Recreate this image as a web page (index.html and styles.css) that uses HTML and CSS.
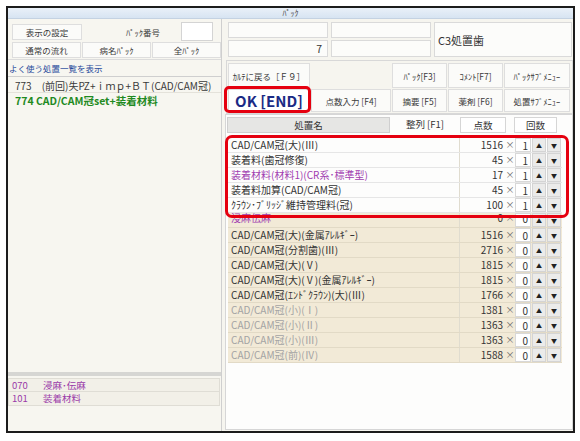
FILE: index.html
```html
<!DOCTYPE html>
<html lang="ja">
<head>
<meta charset="utf-8">
<link rel="stylesheet" href="styles.css">
</head>
<body>
<div class="win">
  <div class="title">ﾊﾟｯｸ</div>
  <div class="body">
    <div class="left">
      <div class="ltop">
        <div class="lrow">
          <div class="btn w70">表示の設定</div>
          <div class="lbl">ﾊﾟｯｸ番号</div>
          <div class="inp"></div>
        </div>
        <div class="lrow">
          <div class="btn w70">通常の流れ</div>
          <div class="btn w70">病名ﾊﾟｯｸ</div>
          <div class="btn w70">全ﾊﾟｯｸ</div>
        </div>
      </div>
      <div class="link">よく使う処置一覧を表示</div>
      <div class="plist">
        <div class="pitem">773　(前回)失PZ+ｉｍｐ+ＢＴ(CAD/CAM冠)</div>
        <div class="pitem sel">774 CAD/CAM冠set+装着材料</div>
      </div>
      <div class="divider"></div>
      <div class="blist">
        <div class="bitem"><span class="code">070</span>浸麻･伝麻</div>
        <div class="bitem"><span class="code">101</span>装着材料</div>
      </div>
    </div>
    <div class="right">
      <div class="rtop">
        <div class="box"></div>
        <div class="box"></div>
        <div class="box tooth">C3処置歯</div>
        <div class="box num">7</div>
        <div class="box"></div>
      </div>
      <div class="btns">
        <div class="btn">ｶﾙﾃに戻る［Ｆ９］</div>
        <div class="blank"></div>
        <div class="btn">ﾊﾟｯｸ[F3]</div>
        <div class="btn">ｺﾒﾝﾄ[F7]</div>
        <div class="btn">ﾊﾟｯｸｻﾌﾞﾒﾆｭｰ</div>
        <div class="btn ok">OK [END]</div>
        <div class="btn">点数入力 [F4]</div>
        <div class="btn">摘要 [F5]</div>
        <div class="btn">薬剤 [F6]</div>
        <div class="btn">処置ｻﾌﾞﾒﾆｭｰ</div>
      </div>
      <div class="tbox">
        <div class="thead">
          <div class="th-name">処置名</div>
          <div class="th-sort">整列 [F1]</div>
          <div class="th-box pts">点数</div>
          <div class="th-box cnt">回数</div>
        </div>
        <div class="rows">
          <div class="group">
            <div class="row white"><div class="nm">CAD/CAM冠(大)(Ⅲ)</div><div class="pt">1516</div><div class="x">×</div><div class="q">1</div><div class="ar">▲</div><div class="ar">▼</div></div>
            <div class="row white"><div class="nm">装着料(歯冠修復)</div><div class="pt">45</div><div class="x">×</div><div class="q">1</div><div class="ar">▲</div><div class="ar">▼</div></div>
            <div class="row white purple"><div class="nm">装着材料(材料1)(CR系･標準型)</div><div class="pt">17</div><div class="x">×</div><div class="q">1</div><div class="ar">▲</div><div class="ar">▼</div></div>
            <div class="row white"><div class="nm">装着料加算(CAD/CAM冠)</div><div class="pt">45</div><div class="x">×</div><div class="q">1</div><div class="ar">▲</div><div class="ar">▼</div></div>
            <div class="row white"><div class="nm">ｸﾗｳﾝ･ﾌﾞﾘｯｼﾞ維持管理料(冠)</div><div class="pt">100</div><div class="x">×</div><div class="q">1</div><div class="ar">▲</div><div class="ar">▼</div></div>
          </div>
          <div class="row purple under"><div class="nm">浸麻伝麻</div><div class="pt">0</div><div class="x">×</div><div class="q">0</div><div class="ar">▲</div><div class="ar">▼</div></div>
          <div class="row"><div class="nm">CAD/CAM冠(大)(金属ｱﾚﾙｷﾞｰ)</div><div class="pt">1516</div><div class="x">×</div><div class="q">0</div><div class="ar">▲</div><div class="ar">▼</div></div>
          <div class="row"><div class="nm">CAD/CAM冠(分割歯)(Ⅲ)</div><div class="pt">2716</div><div class="x">×</div><div class="q">0</div><div class="ar">▲</div><div class="ar">▼</div></div>
          <div class="row"><div class="nm">CAD/CAM冠(大)(Ⅴ)</div><div class="pt">1815</div><div class="x">×</div><div class="q">0</div><div class="ar">▲</div><div class="ar">▼</div></div>
          <div class="row"><div class="nm">CAD/CAM冠(大)(Ⅴ)(金属ｱﾚﾙｷﾞｰ)</div><div class="pt">1815</div><div class="x">×</div><div class="q">0</div><div class="ar">▲</div><div class="ar">▼</div></div>
          <div class="row"><div class="nm">CAD/CAM冠(ｴﾝﾄﾞｸﾗｳﾝ)(大)(Ⅲ)</div><div class="pt">1766</div><div class="x">×</div><div class="q">0</div><div class="ar">▲</div><div class="ar">▼</div></div>
          <div class="row gray"><div class="nm">CAD/CAM冠(小)(Ⅰ)</div><div class="pt">1381</div><div class="x">×</div><div class="q">0</div><div class="ar">▲</div><div class="ar">▼</div></div>
          <div class="row gray"><div class="nm">CAD/CAM冠(小)(Ⅱ)</div><div class="pt">1363</div><div class="x">×</div><div class="q">0</div><div class="ar">▲</div><div class="ar">▼</div></div>
          <div class="row gray"><div class="nm">CAD/CAM冠(小)(Ⅲ)</div><div class="pt">1363</div><div class="x">×</div><div class="q">0</div><div class="ar">▲</div><div class="ar">▼</div></div>
          <div class="row gray"><div class="nm">CAD/CAM冠(前)(Ⅳ)</div><div class="pt">1588</div><div class="x">×</div><div class="q">0</div><div class="ar">▲</div><div class="ar">▼</div></div>
        </div>
      </div>
    </div>
  </div>
</div>
</body>
</html>
```
FILE: styles.css
```css
* { box-sizing: border-box; }
html, body { margin: 0; padding: 0; background: #fff; }
body {
  font-family: "Noto Sans CJK JP", "Noto Sans", sans-serif;
  color: #333;
  font-size: 9px;
}
.win {
  margin: 6px 0 0 6px;
  width: 569px;
  height: 427px;
  border: 2px solid #1c1c1c;
  background: #f6f5ef;
  display: flex;
  flex-direction: column;
}
.title {
  height: 11px;
  background: linear-gradient(#e9f0f8, #d7e4f2);
  border-bottom: 1px solid #c4d2e2;
  font-size: 8px;
  line-height: 10px;
  text-align: center;
  color: #444;
}
.body { flex: 1; display: flex; min-height: 0; }

/* left */
.left {
  width: 214px;
  border-right: 1px solid #cfcfcf;
  display: flex;
  flex-direction: column;
  background: #f7f6f0;
}
.ltop {
  height: 41px;
  padding: 4px 0 0 4px;
  border-bottom: 1px solid #dcdcdc;
  display: flex;
  flex-direction: column;
  gap: 1px;
}
.lrow { display: flex; gap: 1px; align-items: center; height: 17px; }
.btn {
  background: #fbfbf9;
  border: 1px solid #dedede;
  display: flex;
  align-items: center;
  justify-content: center;
  font-size: 8.5px;
  color: #3a3a3a;
  white-space: nowrap;
}
.w70 { width: 70px; height: 16px; }
.lbl { width: 97px; text-align: right; padding-right: 20px; font-size: 8.5px; color: #3a3a3a; }
.inp { width: 32px; height: 19px; background: #fff; border: 1px solid #d4d4d4; }
.link {
  height: 16px;
  line-height: 16px;
  padding-left: 1px;
  color: #2a4c9c;
  font-size: 8.5px;
}
.plist { flex: 1; border-top: 1px solid #cfcfcf; padding-top: 1px; }
.pitem {
  height: 15px;
  line-height: 15px;
  padding-left: 7px;
  font-size: 10px;
  white-space: nowrap;
  color: #3a3a3a;
  border-bottom: 1px solid #e4e2da;
}
.pitem.sel { color: #1f8a1f; font-weight: bold; font-size: 10.5px; border-bottom: none; }
.divider { height: 4px; background: #d6d6d3; }
.blist { height: 55px; padding-top: 2px; }
.bitem {
  height: 14px;
  line-height: 13px;
  width: 212px;
  background: #f2f0e8;
  border: 1px solid #dfddd5;
  border-top: none;
  color: #9a3aa8;
  font-size: 9.5px;
  padding-left: 3px;
  white-space: nowrap;
}
.bitem:first-child { border-top: 1px solid #dfddd5; }
.code { display: inline-block; width: 31px; }

/* right */
.right { flex: 1; display: flex; flex-direction: column; }
.rtop {
  height: 41px;
  padding: 3px 0 0 6px;
  display: grid;
  grid-template-columns: 100px 100px 138px;
  grid-template-rows: 16px 17px;
  column-gap: 3px;
  row-gap: 2px;
}
.box { background: #fcfcfa; border: 1px solid #dadada; }
.tooth {
  grid-column: 3;
  grid-row: 1 / span 2;
  display: flex;
  align-items: center;
  padding-left: 3px;
  font-size: 11px;
  color: #333;
}
.num { text-align: right; padding-right: 5px; font-size: 10.5px; line-height: 15px; }
.btns {
  height: 54px;
  margin-left: 4px;
  border: 1px solid #d8d8d8;
  padding: 2px 1px 1px 1px;
  display: grid;
  grid-template-columns: 82px 80px 55px 55px 66px;
  grid-template-rows: 25px 23px;
  gap: 1px;
}
.btns .btn { font-size: 8.5px; }
.btn.ok {
  position: relative;
  background: #fff;
  color: #1b2a85;
  font-weight: bold;
  font-size: 15px;
}
.btn.ok::after {
  content: "";
  position: absolute;
  top: -4px; left: -5px; right: -2px; bottom: -2px;
  border: 3px solid #e5000f;
  border-radius: 5px;
}
.tbox {
  flex: 1;
  margin: 0 0 1px 3px;
  border: 1px solid #d6d6d6;
  background: #fdfdfc;
  padding: 2px 0 0 1px;
}
.thead { display: flex; height: 16px; align-items: stretch; }
.th-name {
  width: 163px;
  background: #e6e6e4;
  border: 1px solid #cfcfcf;
  text-align: center;
  font-size: 9.5px;
  line-height: 14px;
}
.th-sort { width: 70px; text-align: center; font-size: 9.5px; line-height: 15px; }
.th-box {
  background: #fff;
  border: 1px solid #d6d6d6;
  text-align: center;
  font-size: 9.5px;
  line-height: 14px;
}
.pts { width: 46px; }
.cnt { width: 43px; margin-left: 8px; }
.rows { margin: 5px 0 0 1px; width: 334px; }
.group { position: relative; z-index: 1; }
.group::after {
  content: "";
  position: absolute;
  top: -3px; left: -3px; right: -7px; bottom: -5px;
  border: 3px solid #e5000f;
  border-radius: 7px;
}
.row {
  display: flex;
  height: 15px;
  background: #f2ead7;
  border-bottom: 1px solid #e2dac6;
  font-size: 10px;
  line-height: 14px;
  white-space: nowrap;
}
.row.under { line-height: 10px; }
.row.white { background: #fdfdfc; border-bottom-color: #e6e6e6; }
.row.purple .nm { color: #a03cb0; }
.row.gray .nm { color: #a3a3a3; }
.nm { width: 232px; padding-left: 3px; border-right: 1px solid #e0dccf; overflow: hidden; }
.pt { width: 45px; text-align: right; padding-right: 2px; }
.x { width: 10px; text-align: center; color: #666; font-size: 9px; }
.q {
  width: 16px;
  background: #fff;
  border: 1px solid #d8d8d8;
  text-align: right;
  padding-right: 2px;
}
.ar {
  width: 14px;
  margin-left: 1px;
  background: #ebebea;
  border: 1px solid #d4d4d4;
  font-size: 6px;
  line-height: 13px;
  text-align: center;
  color: #222;
}
```
